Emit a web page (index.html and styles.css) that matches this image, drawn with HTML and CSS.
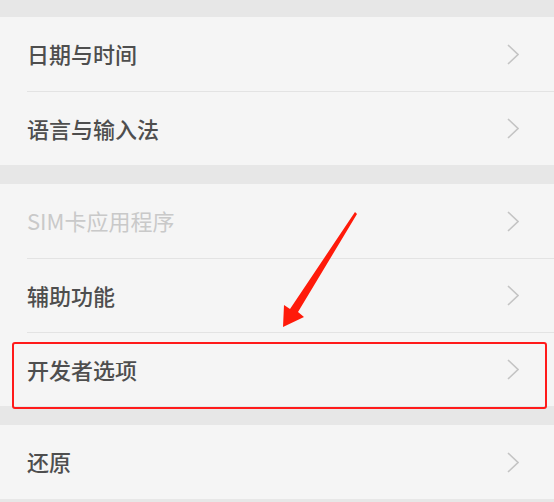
FILE: index.html
```html
<!DOCTYPE html>
<html>
  <head>
    <meta charset="utf-8">
    <title>设置</title>
    <link rel="stylesheet" href="styles.css">
  </head>
  <body>
    <div class="page">
      <div class="group">
        <div class="row"><span class="label">日期与时间</span><svg class="chev" width="12" height="21" viewBox="0 0 12 21"><path d="M1 1 L11 10.5 L1 20" /></svg></div>
        <div class="row"><span class="label">语言与输入法</span><svg class="chev" width="12" height="21" viewBox="0 0 12 21"><path d="M1 1 L11 10.5 L1 20" /></svg></div>
      </div>

      <div class="group">
        <div class="row disabled"><span class="label">SIM卡应用程序</span><svg class="chev" width="12" height="21" viewBox="0 0 12 21"><path d="M1 1 L11 10.5 L1 20" /></svg></div>
        <div class="row"><span class="label">辅助功能</span><svg class="chev" width="12" height="21" viewBox="0 0 12 21"><path d="M1 1 L11 10.5 L1 20" /></svg></div>
        <div class="row"><span class="label">开发者选项</span><svg class="chev" width="12" height="21" viewBox="0 0 12 21"><path d="M1 1 L11 10.5 L1 20" /></svg></div>
      </div>

      <div class="group">
        <div class="row"><span class="label">还原</span><svg class="chev" width="12" height="21" viewBox="0 0 12 21"><path d="M1 1 L11 10.5 L1 20" /></svg></div>
      </div>

      <!-- annotation drawn over the list -->
      <div class="highlight"></div>
      <svg class="arrow" width="554" height="502" viewBox="0 0 554 502">
        <polygon points="355,212 357,214 298,312 304,317 283,327 284,305 290,309" fill="#ff1a0a"/>
      </svg>
    </div>
  </body>
</html>
```

FILE: styles.css
```css
body {
    margin: 0 ;
    background-color: #e7e7e7 ;
    font-family: "Noto Sans CJK SC", "Noto Sans", sans-serif ;
}
.page {
    position: relative ;
    width: 554px ;
    height: 502px ;
    padding-top: 17px ;
    box-sizing: border-box ;
    display: flex ;
    flex-direction: column ;
    gap: 19px ;
    overflow: hidden ;
}
.group {
    background-color: #f5f5f5 ;
}
.row {
    height: 74px ;
    display: flex ;
    align-items: center ;
    justify-content: space-between ;
    margin-left: 27px ;
    padding-right: 35px ;
    box-sizing: border-box ;
}
.row + .row {
    border-top: 1px solid #e3e3e3 ;
}
.label {
    font-size: 22px ;
    font-weight: 500 ;
    color: #4e4e4e ;
    margin-top: -2px ;
}
.disabled .label {
    color: #c9c9c9 ;
    font-weight: 400 ;
}
.chev {
    fill: none ;
    stroke: #c4c4c4 ;
    stroke-width: 1.6 ;
}
.group:last-of-type {
    border-bottom: 2px solid #e0e0e0 ;
}
.highlight {
    position: absolute ;
    left: 12px ;
    top: 342px ;
    width: 535px ;
    height: 67px ;
    box-sizing: border-box ;
    border: 2px solid #ff1a1a ;
    border-radius: 3px ;
}
.arrow {
    position: absolute ;
    left: 0 ;
    top: 0 ;
}
```
